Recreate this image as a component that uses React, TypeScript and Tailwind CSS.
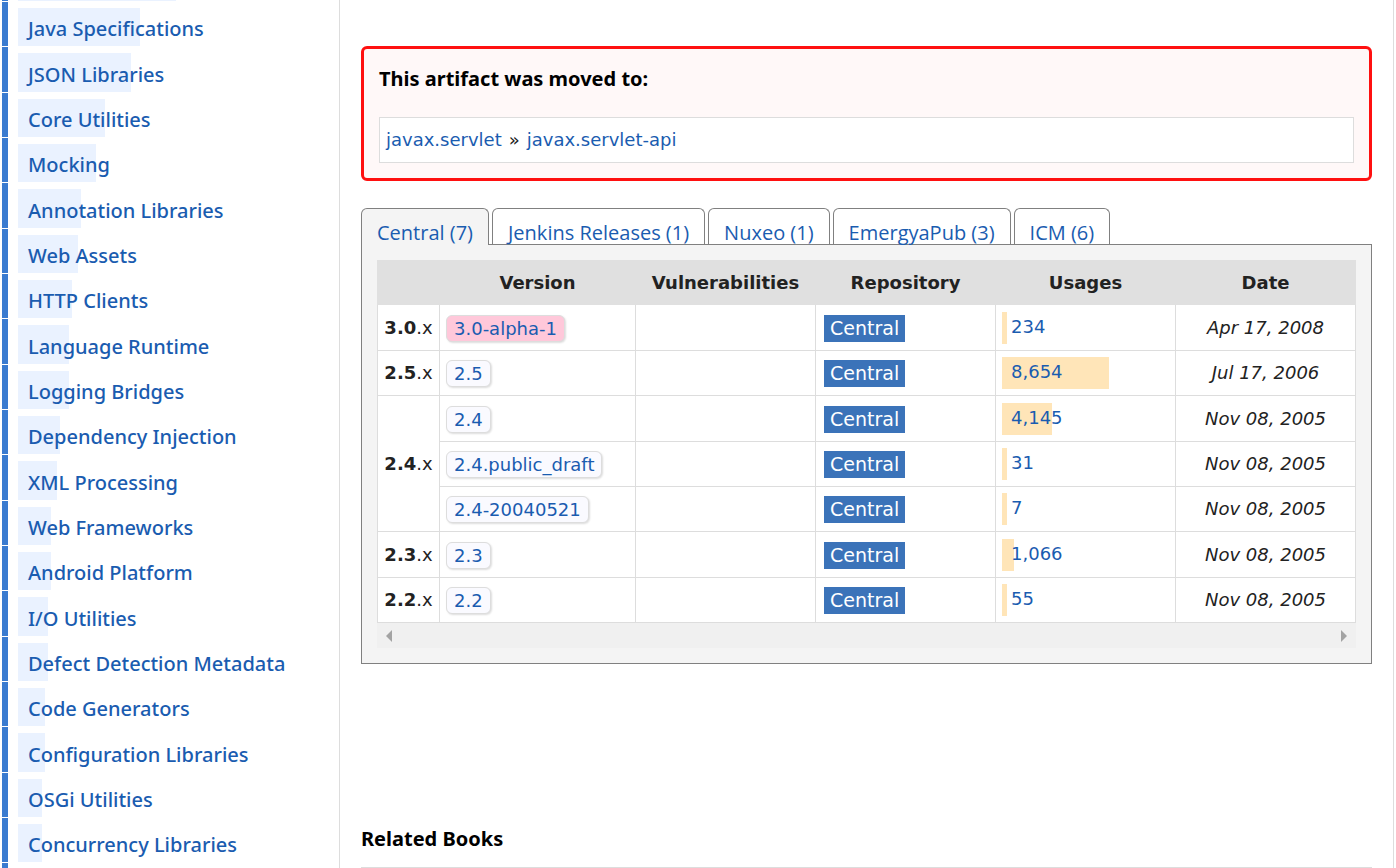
import React from "react";

type Category = { name: string; bar: number };
type Release = {
  branch?: string;
  span?: number;
  version: string;
  alpha?: boolean;
  usages: string;
  bar: number;
  date: string;
};

const categories: Category[] = [
  { name: "Java Specifications", bar: 122 },
  { name: "JSON Libraries", bar: 113 },
  { name: "Core Utilities", bar: 87 },
  { name: "Mocking", bar: 78 },
  { name: "Annotation Libraries", bar: 63 },
  { name: "Web Assets", bar: 60 },
  { name: "HTTP Clients", bar: 54 },
  { name: "Language Runtime", bar: 51 },
  { name: "Logging Bridges", bar: 51 },
  { name: "Dependency Injection", bar: 42 },
  { name: "XML Processing", bar: 39 },
  { name: "Web Frameworks", bar: 33 },
  { name: "Android Platform", bar: 33 },
  { name: "I/O Utilities", bar: 30 },
  { name: "Defect Detection Metadata", bar: 30 },
  { name: "Code Generators", bar: 27 },
  { name: "Configuration Libraries", bar: 27 },
  { name: "OSGi Utilities", bar: 24 },
  { name: "Concurrency Libraries", bar: 24 },
];

const tabs = ["Central (7)", "Jenkins Releases (1)", "Nuxeo (1)", "EmergyaPub (3)", "ICM (6)"];

const releases: Release[] = [
  { branch: "3.0", version: "3.0-alpha-1", alpha: true, usages: "234", bar: 5, date: "Apr 17, 2008" },
  { branch: "2.5", version: "2.5", usages: "8,654", bar: 107, date: "Jul 17, 2006" },
  { branch: "2.4", span: 3, version: "2.4", usages: "4,145", bar: 50, date: "Nov 08, 2005" },
  { version: "2.4.public_draft", usages: "31", bar: 5, date: "Nov 08, 2005" },
  { version: "2.4-20040521", usages: "7", bar: 5, date: "Nov 08, 2005" },
  { branch: "2.3", version: "2.3", usages: "1,066", bar: 12, date: "Nov 08, 2005" },
  { branch: "2.2", version: "2.2", usages: "55", bar: 5, date: "Nov 08, 2005" },
];

function Sidebar() {
  return (
    <nav aria-label="Popular categories" className="w-[340px] shrink-0 overflow-hidden border-r border-[#dddddd] pl-0.5">
      <div className="flex h-px">
        <div className="w-1.5 bg-[#3a7bd0]" />
        <div className="ml-2.5 w-[158px] bg-[#eaf2ff]" />
      </div>
      <ul className="font-['Noto_Sans','Open_Sans',sans-serif] text-xl font-medium text-[#1a5cb0]">
        {categories.map((c) => (
          <li key={c.name} className="flex h-[45px] pt-px [&:nth-child(3n+2)]:h-[46px]">
            <div className="w-1.5 shrink-0 bg-[#3a7bd0]" />
            <a href="#" className="relative ml-2.5 flex min-w-0 flex-1 items-center pl-2.5 whitespace-nowrap">
              <span className="absolute top-1.5 bottom-0 left-0 bg-[#eaf2ff]" style={{ width: c.bar }} />
              <span className="relative pt-2.5">{c.name}</span>
            </a>
          </li>
        ))}
        <li className="flex h-[45px] pt-px">
          <div className="w-1.5 bg-[#3a7bd0]" />
        </li>
      </ul>
    </nav>
  );
}

function MovedNotice() {
  return (
    <section className="rounded-md border-3 border-[#ff1010] bg-[#fff8f8] p-[15px]">
      <h2 className="font-['Noto_Sans','Open_Sans',sans-serif] text-xl leading-[29px] font-bold text-black">
        This artifact was moved to:
      </h2>
      <div className="mt-6 flex h-[46px] items-center gap-[7px] border border-[#dddddd] bg-white px-1.5">
        <a href="#" className="text-[#1a5cb0]">javax.servlet</a>
        <span>»</span>
        <a href="#" className="text-[#1a5cb0]">javax.servlet-api</a>
      </div>
    </section>
  );
}

function Tabs() {
  return (
    <div role="tablist" className="flex gap-[3px] font-['Open_Sans','Noto_Sans',sans-serif] text-xl text-[#1a5cb0]">
      {tabs.map((t, i) => (
        <button
          key={t}
          role="tab"
          aria-selected={i === 0}
          className="h-9 rounded-t-md border border-b-0 border-[#808080] bg-white px-[15px] pt-[13px] leading-[22px] whitespace-nowrap aria-selected:relative aria-selected:-mb-px aria-selected:h-[37px] aria-selected:bg-[#f4f4f4] aria-selected:pb-px"
        >
          {t}
        </button>
      ))}
    </div>
  );
}

function VersionTable() {
  return (
    <table className="w-full table-fixed border-collapse bg-white">
      <colgroup>
        <col className="w-[62px]" />
        <col className="w-[196px]" />
        <col />
        <col />
        <col />
        <col />
      </colgroup>
      <thead className="[&_th]:border [&_th]:border-[#e0e0e0] [&_th]:p-0">
        <tr className="h-11 bg-[#e0e0e0]">
          <th aria-label="Branch" />
          <th>Version</th>
          <th>Vulnerabilities</th>
          <th>Repository</th>
          <th>Usages</th>
          <th>Date</th>
        </tr>
      </thead>
      <tbody className="[&_td]:border [&_td]:border-[#dddddd] [&_td]:p-0">
        {releases.map((r, i) => (
          <tr key={r.version} className={[0, 2, 5].includes(i) ? "h-[46px]" : "h-[45px]"}>
            {r.branch && (
              <td rowSpan={r.span ?? 1} className="text-center">
                <b>{r.branch}</b>.x
              </td>
            )}
            <td>
              <a
                href="#"
                className={
                  "mt-0.5 ml-1.5 inline-block rounded-md border border-[#dddddd] px-[7px] leading-[25px] text-[#1a5cb0] shadow-[1px_1px_2px_#dddddd] " +
                  (r.alpha ? "bg-[#ffc8da]" : "bg-[#fafaff]")
                }
              >
                {r.version}
              </a>
            </td>
            <td />
            <td>
              <a
                href="#"
                className="mt-0.5 ml-2 inline-block bg-[#3b73b9] px-1.5 text-[19px] leading-[27px] text-white"
              >
                Central
              </a>
            </td>
            <td>
              <a href="#" className="relative ml-1.5 flex h-8 pl-[9px] leading-[29px] text-[#1a5cb0]">
                <span className="absolute inset-y-0 left-0 bg-[#ffe5b8]" style={{ width: r.bar }} />
                <span className="relative">{r.usages}</span>
              </a>
            </td>
            <td className="text-center italic">{r.date}</td>
          </tr>
        ))}
      </tbody>
    </table>
  );
}

function ScrollTrack() {
  return (
    <div className="flex h-[25px] items-center justify-between bg-[#f0f0f0] px-2 text-[#a3a3a3]">
      <svg width="7" height="12" viewBox="0 0 7 12" aria-hidden="true">
        <path d="M7 0v12L1 6z" fill="currentColor" />
      </svg>
      <svg width="7" height="12" viewBox="0 0 7 12" aria-hidden="true">
        <path d="M0 0v12l6-6z" fill="currentColor" />
      </svg>
    </div>
  );
}

export default function App() {
  return (
    <div className="flex h-screen overflow-hidden bg-white pr-0.5 font-['DejaVu_Sans',sans-serif] text-lg text-[#222222]">
      <Sidebar />
      <main className="min-w-0 flex-1 border-r border-[#dddddd] px-[21px] pt-[46px]">
        <MovedNotice />
        <div className="mt-[27px]">
          <Tabs />
          <div className="border border-[#808080] bg-[#f4f4f4] p-[15px]">
            <VersionTable />
            <ScrollTrack />
          </div>
        </div>
        <h2 className="mt-[161px] border-b border-[#dddddd] pb-3.5 font-['Noto_Sans','Open_Sans',sans-serif] text-xl leading-7 font-bold text-black">
          Related Books
        </h2>
      </main>
    </div>
  );
}
